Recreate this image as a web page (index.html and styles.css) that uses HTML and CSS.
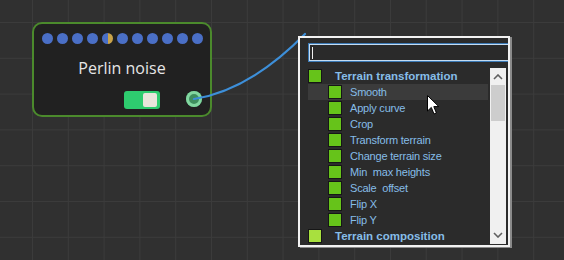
FILE: index.html
```html
<!DOCTYPE html>
<html lang="en">
<head>
  <meta charset="UTF-8">
  <title>Node editor</title>
  <link rel="stylesheet" href="styles.css">
</head>
<body>
  <div class="canvas">

    <!-- Node -->
    <div class="node">
      <div class="inputs">
        <span class="dot"></span><span class="dot"></span><span class="dot"></span><span class="dot"></span>
        <span class="dot half"></span>
        <span class="dot"></span><span class="dot"></span><span class="dot"></span><span class="dot"></span>
        <span class="dot"></span><span class="dot"></span>
      </div>
      <div class="node-title">Perlin noise</div>
      <div class="node-footer">
        <div class="toggle"><span class="knob"></span></div>
        <div class="port"></div>
      </div>
    </div>

    <!-- Link from output port to the menu -->
    <svg class="links" width="564" height="260">
      <path d="M194 99 Q250 90 305 34" fill="none" stroke="#3d8fd9" stroke-width="2.2" stroke-linecap="round"/>
    </svg>

    <!-- Add node menu -->
    <div class="menu">
      <div class="search"><span class="caret"></span></div>
      <div class="list-wrap">
        <ul class="list">
          <li class="group"><span class="sq"></span>Terrain transformation</li>
          <li class="item hover"><span class="sq"></span>Smooth</li>
          <li class="item"><span class="sq"></span>Apply curve</li>
          <li class="item"><span class="sq"></span>Crop</li>
          <li class="item"><span class="sq"></span>Transform terrain</li>
          <li class="item"><span class="sq"></span>Change terrain size</li>
          <li class="item"><span class="sq"></span>Min&nbsp; max heights</li>
          <li class="item"><span class="sq"></span>Scale&nbsp; offset</li>
          <li class="item"><span class="sq"></span>Flip X</li>
          <li class="item"><span class="sq"></span>Flip Y</li>
          <li class="group"><span class="sq light"></span>Terrain composition</li>
        </ul>
        <div class="scrollbar">
          <svg class="arrow" width="10" height="6" viewBox="0 0 10 6"><path d="M1 5 L5 1 L9 5" fill="none" stroke="#606060" stroke-width="1.6"/></svg>
          <div class="thumb"></div>
          <div class="track-fill"></div>
          <svg class="arrow" width="10" height="6" viewBox="0 0 10 6"><path d="M1 1 L5 5 L9 1" fill="none" stroke="#606060" stroke-width="1.6"/></svg>
        </div>
      </div>
    </div>

    <!-- Mouse pointer -->
    <svg class="pointer" width="13" height="21" viewBox="0 0 13 21">
      <path d="M0.5 0.5 L0.5 16 L4.3 12.4 L7 19 L9.4 18 L6.8 11.6 L11.8 11.6 Z" fill="#fff" stroke="#000" stroke-width="1"/>
    </svg>

  </div>
</body>
</html>
```

FILE: styles.css
```css
body {
  margin: 0;
  padding: 0;
  font-family: "Liberation Sans", Arial, sans-serif;
}

.canvas {
  position: relative;
  width: 564px;
  height: 260px;
  overflow: hidden;
  background-color: #303030;
  background-image:
    linear-gradient(90deg, #3b3b3b 1px, transparent 1px),
    linear-gradient(180deg, #3b3b3b 1px, transparent 1px);
  background-size: 35.8px 35.8px;
  background-position: 32px 22px;
}

.links {
  position: absolute;
  left: 0;
  top: 0;
}

/* node */
.node {
  position: absolute;
  left: 32px;
  top: 22px;
  width: 176px;
  height: 91px;
  border: 2px solid #4b8a2c;
  border-radius: 10px;
  background: #212121;
  display: flex;
  flex-direction: column;
  align-items: center;
}

.inputs {
  display: flex;
  gap: 4px;
  margin-top: 9px;
}

.dot {
  width: 11px;
  height: 11px;
  border-radius: 50%;
  background: #4a6fc6;
}

.dot.half {
  background: linear-gradient(90deg, #4a6fc6 50%, #c9a34a 50%);
}

.node-title {
  margin-top: 13px;
  font-family: "Open Sans", sans-serif;
  font-size: 16px;
  line-height: 22px;
  color: #e6e6e6;
}

.node-footer {
  align-self: stretch;
  display: flex;
  justify-content: flex-end;
  align-items: center;
  gap: 26px;
  margin-top: 12px;
  padding-right: 8px;
}

.toggle {
  width: 36px;
  height: 18px;
  border-radius: 3px;
  background: #2ecc6f;
  display: flex;
  justify-content: flex-end;
  align-items: center;
  padding-right: 3px;
  box-sizing: border-box;
}

.knob {
  width: 14px;
  height: 14px;
  border-radius: 2px;
  background: #e9e5dc;
}

.port {
  width: 16px;
  height: 16px;
  border-radius: 50%;
  background: #3f8f5e;
  box-shadow: inset 0 0 0 3px #82d7a0;
  margin-top: -2px;
}

/* menu */
.menu {
  position: absolute;
  left: 298px;
  top: 36px;
  width: 208px;
  height: 207px;
  border: 2px solid #f2f2f2;
  background: #2b2b2b;
  box-shadow: 2px 1px 0 #8a8a8a;
  overflow: hidden;
  display: flex;
  flex-direction: column;
}

.search {
  margin: 5px 0 0 8px;
  width: 230px;
  height: 19px;
  flex: none;
  box-sizing: border-box;
  border: 1px solid #3b79b5;
  box-shadow: inset 0 0 0 1px #c4dcf2;
  background: #2a2a2a;
  display: flex;
  align-items: center;
  padding-left: 3px;
}

.caret {
  width: 1px;
  height: 12px;
  background: #f0f0f0;
}

.list-wrap {
  display: flex;
  margin-top: 6px;
  padding-right: 2px;
}

.list {
  list-style: none;
  margin: 0;
  padding: 0 0 0 8px;
  flex: 1;
}

.list li {
  height: 16px;
  display: flex;
  align-items: center;
  color: #86bde8;
  font-size: 11px;
  letter-spacing: -0.2px;
  white-space: nowrap;
}

.list .group {
  font-weight: bold;
  font-size: 11.5px;
  letter-spacing: 0;
}

.list .group .sq {
  margin-right: 13px;
}

.list .item {
  padding-left: 20px;
}

.list .item .sq {
  margin-right: 8px;
}

.list .hover {
  background: #3b3b3b;
  margin-right: 2px;
}

.sq {
  width: 12px;
  height: 12px;
  flex: none;
  background: #66c31a;
  border: 1px solid #161616;
}

.sq.light {
  background: #a8e03e;
}

.scrollbar {
  width: 16px;
  height: 176px;
  background: #f0f0f0;
  display: flex;
  flex-direction: column;
  align-items: center;
}

.arrow {
  flex: none;
  margin: 6px 0;
}

.thumb {
  width: 14px;
  height: 36px;
  margin-top: -1px;
  background: #cdcdcd;
  flex: none;
}

.track-fill {
  flex: 1;
}

.pointer {
  position: absolute;
  left: 427px;
  top: 95px;
}
```
